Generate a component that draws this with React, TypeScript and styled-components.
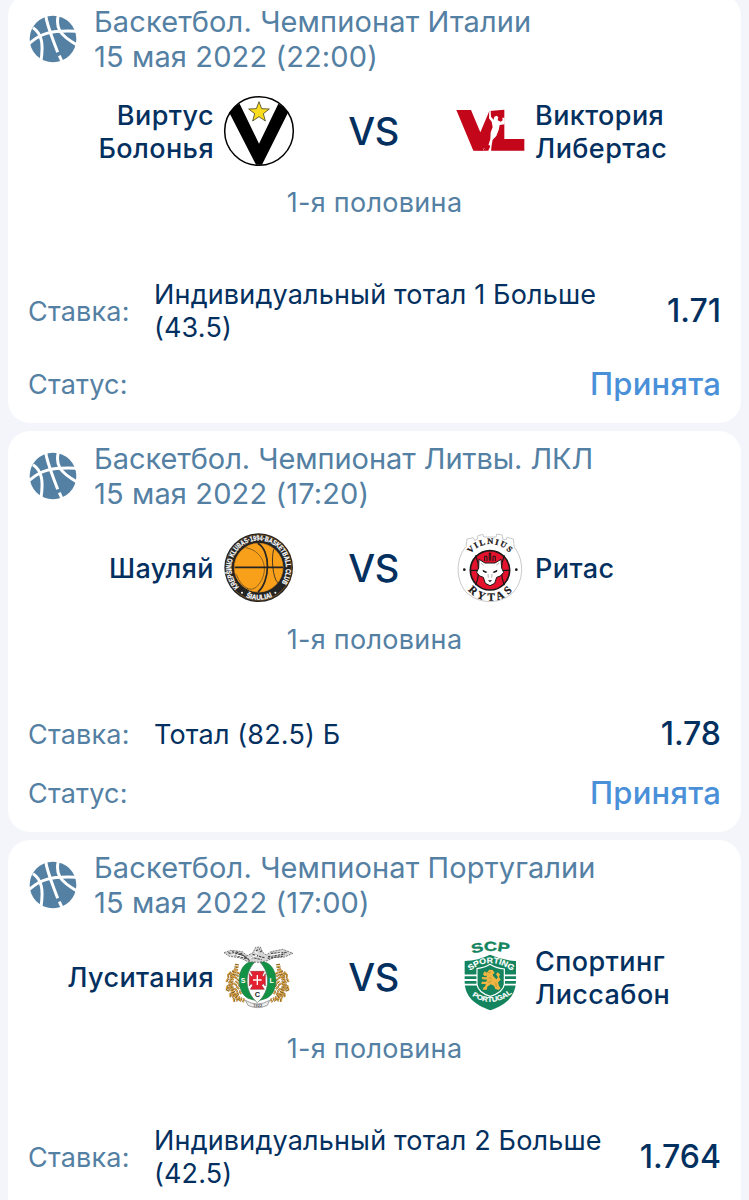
import styled, { createGlobalStyle } from 'styled-components'

const GlobalStyle = createGlobalStyle`
  body {
    margin: 0;
    background: #f4f5fa;
    font-family: Inter, 'Liberation Sans', sans-serif;
  }
`

const Screen = styled.div`
  height: 1200px;
  overflow: hidden;
`

const List = styled.div`
  display: grid;
  gap: 8px;
  margin-top: -6px;
  padding: 0 8px;
`

const Card = styled.div`
  box-sizing: border-box;
  min-height: 401px;
  padding: 10px 20px 20px;
  background: #fff;
  border-radius: 22px;
`

const CardHead = styled.div`
  display: flex;
  align-items: center;
  height: 70px;
  padding-left: 1px;
`

const HeadText = styled.div`
  margin-left: 17px;
  color: #5480a3;
  font-size: 29px;
  line-height: 35px;
  letter-spacing: 0.13px;
  white-space: nowrap;
`

const League = styled.div<{ $tracking?: number }>`
  letter-spacing: ${(p) => p.$tracking ?? 0.12}px;
`

const Teams = styled.div`
  display: grid;
  grid-template-columns: 1fr 161px 1fr;
  align-items: center;
  height: 70px;
  margin-top: 22px;
`

const Team = styled.div<{ $reverse?: boolean }>`
  display: flex;
  flex-direction: ${(p) => (p.$reverse ? 'row-reverse' : 'row')};
  align-items: center;
  gap: 10px;
  text-align: ${(p) => (p.$reverse ? 'right' : 'left')};
`

const TeamName = styled.div`
  padding-top: 1px;
  color: #03305f;
  font-weight: 500;
  font-size: 27px;
  line-height: 33px;
  letter-spacing: 0.42px;
  white-space: pre-line;
`

const Versus = styled.div`
  padding-right: 2px;
  color: #03305f;
  font-weight: 500;
  font-size: 38px;
  line-height: 44px;
  letter-spacing: -0.6px;
  text-align: center;
`

const Period = styled.div`
  margin-top: 21px;
  color: #5480a3;
  font-size: 27px;
  line-height: 32px;
  letter-spacing: 0.3px;
  text-align: center;
`

const BetRow = styled.div`
  display: flex;
  align-items: center;
  min-height: 38px;
  margin-top: 59px;
`

const Label = styled.div`
  width: 126px;
  color: #5480a3;
  font-size: 27px;
  line-height: 33px;
  letter-spacing: 0.2px;
`

const BetName = styled.div`
  flex: 1;
  color: #03305f;
  font-size: 27px;
  line-height: 33px;
  letter-spacing: 0.16px;
`

const Odds = styled.div`
  color: #03305f;
  font-weight: 500;
  font-size: 32px;
  line-height: 38px;
`

const StatusRow = styled.div`
  display: flex;
  align-items: center;
  justify-content: space-between;
  height: 39px;
  margin-top: 20px;

  ${Label} {
    padding-top: 1px;
  }
`

const Status = styled.div`
  color: #4a90d9;
  font-weight: 500;
  font-size: 31px;
  line-height: 38px;
  letter-spacing: 0.25px;
`

const Logo = styled.svg`
  flex: none;
  width: 70px;
  height: 70px;
  overflow: visible;
  font-family: 'Liberation Sans', sans-serif;
  font-weight: 700;
`

const BallIcon = () => (
  <svg width="48" height="48" viewBox="26 20 144 144">
    <circle cx="98" cy="92" r="70" fill="#5480a3" />
    <g fill="none" stroke="#fff" strokeWidth="9">
      <path d="M76 20C79 48 91 75 112 132" />
      <path d="M117 142L127 164" />
      <path d="M26 106C58 78 88 64 172 69" />
      <path d="M38 58C66 76 70 110 61 164" />
      <path d="M114 20C105 60 117 80 172 111" />
    </g>
  </svg>
)

const VirtusLogo = () => (
  <Logo viewBox="27 18 210 210">
    <circle cx="132" cy="123" r="103" fill="#fff" stroke="#000" strokeWidth="4.5" />
    <path d="M43 68Q57 49 74 41L132 161L190 41Q207 50 220 66L141 224H123Z" fill="#000" />
    <path
      d="M132 35L140 56L163 57L145 71L151 93L132 80L113 93L119 71L101 57L124 56Z"
      fill="#fadc1e"
      stroke="#4b4520"
      strokeWidth="2.5"
    />
  </Logo>
)

const VictoriaLogo = () => (
  <Logo viewBox="15 3 210 210">
    <path d="M19 45H63L91 112L118 48L163 44V132H223V167H70Z" fill="#c4061a" />
    <path
      d="M118 44L122 45L123 65L131 74L133 65L140 62L145 67L143 76L152 80L158 76L157 68H164V88L149 90L146 105L139 123L128 134L125 151L123 168H115L120 153L115 151L121 132L122 112L128 97L125 80L117 70Z"
      fill="#fff"
    />
    <path d="M100 161L117 158L125 169H98Z" fill="#fff" />
    <path d="M71 167L98 166L117 149L120 154L115 167Z" fill="#c4061a" />
  </Logo>
)

const SiauliaiLogo = () => (
  <Logo viewBox="27 24 210 210">
    <circle cx="131" cy="128" r="103" fill="#242424" />
    <circle cx="131" cy="128" r="98" fill="none" stroke="#bd7b22" strokeWidth="1.5" />
    <circle cx="131" cy="128" r="73" fill="#f9a01b" stroke="#e6931b" strokeWidth="2" />
    <g fill="none" stroke="#242424">
      <path d="M59 127H204" strokeWidth="5" />
      <path d="M128 55C168 76 166 169 129 201" strokeWidth="5" />
      <path d="M92 68C152 79 167 147 122 188Q112 196 96 191" strokeWidth="1.5" />
      <path d="M176 73C168 102 174 159 188 173" strokeWidth="2.5" />
      <path d="M64 148Q76 181 99 191" strokeWidth="1.5" />
    </g>
    <defs>
      <path id="siauliai-top" d="M78 191A82 82 0 1 1 184 191" />
      <path id="siauliai-bottom" d="M76 207A96 96 0 0 0 186 207" />
    </defs>
    <g fill="#fff" stroke="#fff" strokeWidth="0.6">
      <text fontSize="22">
        <textPath href="#siauliai-top" startOffset="8" textLength="368" lengthAdjust="spacingAndGlyphs">
          KREPŠINIO KLUBAS·1994·BASKETBALL CLUB
        </textPath>
      </text>
      <text fontSize="21">
        <textPath href="#siauliai-bottom" startOffset="19" textLength="82" lengthAdjust="spacingAndGlyphs">
          ŠIAULIAI
        </textPath>
      </text>
    </g>
    <circle cx="81" cy="203" r="3" fill="#fff" />
    <circle cx="181" cy="203" r="3" fill="#fff" />
  </Logo>
)

const RytasLogo = () => (
  <Logo viewBox="15 24 210 210">
    <path
      d="M48 65L51 42L70 38L74 46L82 43L82 33L99 28L101 36H138L140 27L157 30L158 42L168 45L171 37L190 42L193 67C226 108 220 174 186 205C148 239 90 237 52 205C19 174 13 105 48 65Z"
      fill="#fff"
      stroke="#c9c9c9"
      strokeWidth="3"
    />
    <circle cx="120" cy="136" r="59" fill="#e4122c" stroke="#1b1718" strokeWidth="5" />
    <g stroke="#1b1718" strokeWidth="3.5" fill="none">
      <path d="M61 136H179" />
      <path d="M77 91Q95 136 77 181M163 91Q145 136 163 181" />
    </g>
    <path d="M104 108V94H111V108M118 107V84H122V107M129 108V94H136V108" fill="none" stroke="#1b1718" strokeWidth="3" />
    <path
      d="M87 103L105 114H135L153 103L155 129L161 142L151 153L140 157L134 175L120 182L106 175L100 157L89 153L80 142L86 129Z"
      fill="#fff"
      stroke="#1b1718"
      strokeWidth="3"
    />
    <path d="M98 134L112 141L108 144L99 140ZM142 134L128 141L132 144L141 140ZM114 166H126L120 172Z" fill="#1b1718" />
    <path d="M114 147L115 158M126 147L125 158M93 114L101 121M147 114L139 121" stroke="#8b8788" strokeWidth="2" />
    <circle cx="43" cy="134" r="4" fill="#1b1718" />
    <circle cx="199" cy="134" r="4" fill="#1b1718" />
    <defs>
      <path id="rytas-top" d="M60 88A76 76 0 0 1 182 88" />
      <path id="rytas-bottom" d="M48 187A86 86 0 0 0 194 187" />
    </defs>
    <g fill="#1b1718" stroke="#1b1718" strokeWidth="0.8" fontFamily="Liberation Serif, serif">
      <text fontSize="25">
        <textPath href="#rytas-top" startOffset="3" textLength="132">
          VILNIUS
        </textPath>
      </text>
      <text fontSize="33">
        <textPath href="#rytas-bottom" startOffset="10" textLength="152">
          RYTAS
        </textPath>
      </text>
    </g>
  </Logo>
)

const branch =
  'M88 197C49 187 38 145 60 105M54 163L33 156M53 145L34 134M57 128L41 112M61 114L66 87M59 150L75 132M61 166L79 147M65 180L43 181M75 191L52 196M66 176L86 168M45 150L37 168M50 122L36 124M60 130L72 112M58 186L50 171'

const LusitaniaLogo = () => (
  <Logo viewBox="27 21 210 210">
    {['', 'translate(255 0) scale(-1 1)'].map((transform) => (
      <g key={transform} transform={transform} fill="none">
        <path d={branch} stroke="#8a6427" strokeWidth="12" strokeDasharray="5 3" />
        <path d={branch} stroke="#e5ab46" strokeWidth="9" strokeDasharray="4 5" />
        <path d={branch} stroke="#5f4a2c" strokeWidth="2" strokeDasharray="3 5" />
      </g>
    ))}
    <path
      d="M105 81C62 92 62 182 106 192L127 198L148 192C194 180 194 92 148 81Z"
      fill="#129244"
      stroke="#17743a"
      strokeWidth="2"
    />
    <path d="M127 74C86 108 86 168 127 203C168 168 168 108 127 74Z" fill="#fff" stroke="#47735a" strokeWidth="2" />
    <path
      d="M106 109H148L142 121L146 125L151 116V153L145 146L140 151L148 163H106L113 151L108 146L103 153V116L109 125L113 121Z"
      fill="#e3202f"
      stroke="#8c1c26"
      strokeWidth="1.5"
    />
    <path d="M127 120V150M114 135H140" stroke="#fff" strokeWidth="4" />
    <g fill="none">
      <path
        d="M27 53L47 46L82 50L96 62L113 54L122 37L136 36L143 52L154 60L168 50L203 43L234 55L208 66L178 67L157 77L130 82L99 80L73 68L43 64Z"
        fill="#d6d6d6"
        stroke="#777"
        strokeWidth="3"
        strokeDasharray="6 3"
      />
      <path
        d="M40 53L92 71M51 50L95 67M64 50L101 73M77 54L104 77M168 55L217 52M159 65L210 57M158 70L203 64M113 58L151 69M108 67L140 74M123 47L135 42M135 51L141 47"
        strokeWidth="3.5"
        stroke="#484848"
        strokeDasharray="7 3"
      />
      <path d="M48 57L86 65M104 70L126 61M168 61L200 54M120 50L128 56" stroke="#fff" strokeWidth="3" />
    </g>
    <path d="M91 196Q128 218 164 196L157 211Q128 225 99 211Z" fill="#eee" stroke="#777" strokeWidth="2" />
    <g textAnchor="middle">
      <text x="84" y="143" fill="#fff" fontSize="21">S</text>
      <text x="170" y="143" fill="#fff" fontSize="21">L</text>
      <text x="127" y="187" fill="#222" fontSize="22">C</text>
      <text x="128" y="217" fill="#555" fontSize="12">1922</text>
    </g>
  </Logo>
)

const SportingLogo = () => (
  <Logo viewBox="15 21 210 210">
    <path
      d="M44 78Q86 76 120 59Q157 76 198 78V139C196 189 164 211 121 226C75 210 44 186 44 139Z"
      fill="#13845d"
    />
    <path d="M41 121H201M41 135H201M41 149H201" stroke="#fff" strokeWidth="5.5" />
    <path
      d="M81 101Q105 98 120 88Q137 100 163 102V148C160 168 143 177 121 184C96 176 83 166 81 148Z"
      fill="#13845d"
      stroke="#fff"
      strokeWidth="3.5"
    />
    <path
      d="M99 117L104 109L110 113L118 104L128 105L134 114L128 118L130 124L139 133L144 127L138 118L143 112L150 118L147 126L152 134L144 142L147 153L152 160L146 165L136 162L132 152L122 148L112 155L110 164L98 164L101 157L106 154L107 147L94 147L95 140L108 140L112 134L97 133L95 126L109 127L111 122L103 123Z"
      fill="#efb543"
    />
    <path d="M113 113L122 112M117 127L125 133M115 142L124 139M137 143L139 155" stroke="#a7872f" strokeWidth="2" />
    <defs>
      <path id="scp" d="M66 57Q120 39 180 55" />
      <path id="sporting" d="M59 108Q121 61 186 107" />
      <path id="portugal" d="M64 181Q121 222 181 179" />
    </defs>
    <text fill="#13845d" stroke="#13845d" strokeWidth="1.2" fontSize="39">
      <textPath href="#scp" startOffset="1" textLength="111" lengthAdjust="spacingAndGlyphs">
        SCP
      </textPath>
    </text>
    <g fill="#fff" stroke="#fff" strokeWidth="0.5">
      <text fontSize="24">
        <textPath href="#sporting" startOffset="1" textLength="138" lengthAdjust="spacingAndGlyphs">
          SPORTING
        </textPath>
      </text>
      <text fontSize="21">
        <textPath href="#portugal" startOffset="2" textLength="131" lengthAdjust="spacingAndGlyphs">
          PORTUGAL
        </textPath>
      </text>
    </g>
  </Logo>
)

interface Bet {
  league: string
  tracking?: number
  date: string
  home: string
  homeLogo: React.ReactNode
  away: string
  awayLogo: React.ReactNode
  bet: string
  odds: string
  status?: string
}

const bets: Bet[] = [
  {
    league: 'Баскетбол. Чемпионат Италии',
    date: '15 мая 2022 (22:00)',
    home: 'Виртус\nБолонья',
    homeLogo: <VirtusLogo />,
    away: 'Виктория\nЛибертас',
    awayLogo: <VictoriaLogo />,
    bet: 'Индивидуальный тотал 1 Больше (43.5)',
    odds: '1.71',
    status: 'Принята',
  },
  {
    league: 'Баскетбол. Чемпионат Литвы. ЛКЛ',
    tracking: -0.06,
    date: '15 мая 2022 (17:20)',
    home: 'Шауляй',
    homeLogo: <SiauliaiLogo />,
    away: 'Ритас',
    awayLogo: <RytasLogo />,
    bet: 'Тотал (82.5) Б',
    odds: '1.78',
    status: 'Принята',
  },
  {
    league: 'Баскетбол. Чемпионат Португалии',
    date: '15 мая 2022 (17:00)',
    home: 'Луситания',
    homeLogo: <LusitaniaLogo />,
    away: 'Спортинг\nЛиссабон',
    awayLogo: <SportingLogo />,
    bet: 'Индивидуальный тотал 2 Больше (42.5)',
    odds: '1.764',
  },
]

export default function App() {
  return (
    <Screen>
      <GlobalStyle />
      <List>
        {bets.map((item) => (
          <Card key={item.league}>
            <CardHead>
              <BallIcon />
              <HeadText>
                <League $tracking={item.tracking}>{item.league}</League>
                <div>{item.date}</div>
              </HeadText>
            </CardHead>
            <Teams>
              <Team $reverse>
                {item.homeLogo}
                <TeamName>{item.home}</TeamName>
              </Team>
              <Versus>VS</Versus>
              <Team>
                {item.awayLogo}
                <TeamName>{item.away}</TeamName>
              </Team>
            </Teams>
            <Period>1-я половина</Period>
            <BetRow>
              <Label>Ставка:</Label>
              <BetName>{item.bet}</BetName>
              <Odds>{item.odds}</Odds>
            </BetRow>
            {item.status && (
              <StatusRow>
                <Label>Статус:</Label>
                <Status>{item.status}</Status>
              </StatusRow>
            )}
          </Card>
        ))}
      </List>
    </Screen>
  )
}
